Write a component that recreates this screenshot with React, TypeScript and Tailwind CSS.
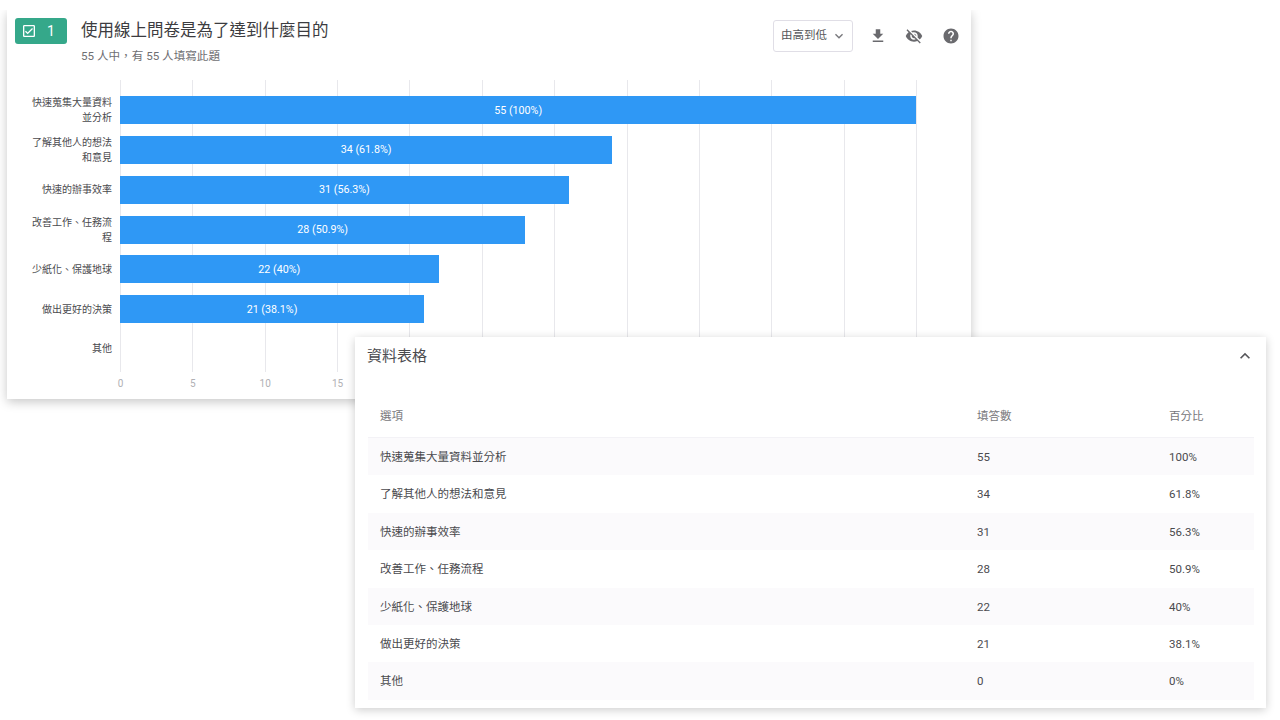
import React from 'react';
import { MdOutlineCheckBox, MdFileDownload, MdVisibilityOff, MdHelp, MdKeyboardArrowUp, MdKeyboardArrowDown } from 'react-icons/md';

const rows = [
  { label: '快速蒐集大量資料並分析', lines: ['快速蒐集大量資料', '並分析'], count: 55, pct: '100%' },
  { label: '了解其他人的想法和意見', lines: ['了解其他人的想法', '和意見'], count: 34, pct: '61.8%' },
  { label: '快速的辦事效率', lines: ['快速的辦事效率'], count: 31, pct: '56.3%' },
  { label: '改善工作、任務流程', lines: ['改善工作、任務流', '程'], count: 28, pct: '50.9%' },
  { label: '少紙化、保護地球', lines: ['少紙化、保護地球'], count: 22, pct: '40%' },
  { label: '做出更好的決策', lines: ['做出更好的決策'], count: 21, pct: '38.1%' },
  { label: '其他', lines: ['其他'], count: 0, pct: '0%' },
];

const ticks = [0, 5, 10, 15, 20, 25, 30, 35, 40, 45, 50, 55];
const UNIT = 14.48;

function Chart() {
  return (
    <div className="relative ml-[113px] w-[800px] h-[292px] mt-[15px]">
      {/* grid lines sit behind the bars */}
      {ticks.map(t => (
        <div key={t} className="absolute top-0 bottom-0 w-px bg-[#e8e8ec]" style={{ left: t * 14.473 }} />
      ))}
      {ticks.map(t => (
        <span key={t} className="absolute top-[298px] w-6 -ml-3 text-center text-[10px] leading-[12px] text-[#b0b0b4]" style={{ left: t * 14.473 + 0.5 }}>
          {t}
        </span>
      ))}
      <div className="relative flex flex-col pt-[10.3px]">
        {rows.map(r => (
          <div key={r.label} className="flex items-center h-[39.8px]">
            <div className="absolute -left-[108px] w-[100px] text-right text-[10px] leading-[15px] text-[#4a4a4e]">
              {r.lines.map(l => <div key={l}>{l}</div>)}
            </div>
            {r.count > 0 && (
              <div
                className="h-[28px] bg-[#2f98f5] flex items-center justify-center pt-px text-[10.7px] text-white"
                style={{ width: r.count * UNIT }}
              >
                {r.count} ({r.pct})
              </div>
            )}
          </div>
        ))}
      </div>
    </div>
  );
}

export default function App() {
  return (
    <div className="relative w-[1280px] h-[720px] overflow-hidden bg-white font-['Roboto','Noto_Sans_CJK_TC',sans-serif]">
      <div className="ml-[7px] mt-[10px] w-[964px] h-[389px] bg-white shadow-[0_3px_10px_rgba(0,0,0,0.22)] [clip-path:inset(0_-20px_-20px_-20px)]">
        <div className="flex justify-between pl-2 pr-[11px] pt-2">
          <div className="flex items-start">
            <div className="w-[52px] h-[26px] rounded-[3px] bg-[#35a88a] flex items-center pl-[6px] gap-[10px] text-white">
              <MdOutlineCheckBox className="w-[16px] h-[16px]" />
              <span className="text-[14px] leading-none">1</span>
            </div>
            <div className="ml-[14px]">
              <h1 className="pt-px text-[16.5px] leading-[24px] text-[#3c3c40]">使用線上問卷是為了達到什麼目的</h1>
              <p className="mt-[4px] text-[11.6px] leading-[18px] text-[#6f6f73]">55 人中，有 55 人填寫此題</p>
            </div>
          </div>
          <div className="flex items-center h-[32px] mt-[2px]">
            <div className="w-[80px] h-[32px] rounded-[3px] border border-[#e0dee6] flex items-center justify-between pl-[7px] pr-[5px] text-[11.5px] text-[#57575b]">
              由高到低
              <MdKeyboardArrowDown className="w-[16px] h-[16px] text-[#77777b]" />
            </div>
            <MdFileDownload className="ml-[16px] w-[18px] h-[18px] text-[#6a6a6e]" />
            <MdVisibilityOff className="ml-[18px] w-[18px] h-[18px] text-[#6a6a6e]" />
            <MdHelp className="ml-[19px] w-[18px] h-[18px] text-[#6a6a6e]" />
          </div>
        </div>
        <Chart />
      </div>

      {/* table card overlaps the chart card */}
      <div className="absolute left-[355px] top-[337px] w-[911px] h-[371px] bg-white shadow-[0_2px_9px_rgba(0,0,0,0.2)]">
        <div className="flex items-center justify-between pl-3 pr-[11px] h-[38px]">
          <h2 className="text-[15px] text-[#4a4a4e]">資料表格</h2>
          <MdKeyboardArrowUp className="w-[20px] h-[20px] text-[#56565a]" />
        </div>
        <div className="ml-[13px] mr-[12px] mt-[22px]">
          <div className="grid grid-cols-[597px_192px_1fr] h-[41px] pb-0 items-center pl-3 text-[11.5px] text-[#77777b] border-b border-[#f3f2f6]">
            <span>選項</span>
            <span>填答數</span>
            <span>百分比</span>
          </div>
          {rows.map((r, i) => (
            <div
              key={r.label}
              className={i % 2 === 0
                ? 'grid grid-cols-[597px_192px_1fr] h-[37.4px] items-center pl-3 pt-[2px] text-[11.5px] text-[#4a4a4e] bg-[#fbfafc]'
                : 'grid grid-cols-[597px_192px_1fr] h-[37.4px] items-center pl-3 pt-[2px] text-[11.5px] text-[#4a4a4e]'}
            >
              <span>{r.label}</span>
              <span>{r.count}</span>
              <span>{r.pct}</span>
            </div>
          ))}
        </div>
      </div>
    </div>
  );
}
